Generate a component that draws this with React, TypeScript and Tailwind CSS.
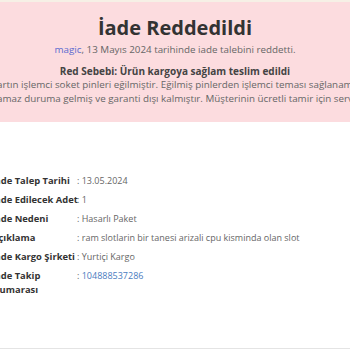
const rows: { label: string; value: string; link?: boolean }[] = [
  { label: 'İade Talep Tarihi', value: '13.05.2024' },
  { label: 'İade Edilecek Adet', value: '1' },
  { label: 'İade Nedeni', value: 'Hasarlı Paket' },
  { label: 'Açıklama', value: 'ram slotlarin bir tanesi arizali cpu kisminda olan slot' },
  { label: 'İade Kargo Şirketi', value: 'Yurtiçi Kargo' },
  { label: 'İade Takip Numarası', value: '104888537286', link: true },
]

export default function App() {
  return (
    <div className="w-[350px] h-[350px] overflow-hidden bg-white font-['Open_Sans',sans-serif] text-[#444]">
      <div className="h-[2px] bg-[#f6f0e6]" />
      <div className="bg-[#fcdcdf] h-[120px] pt-[12px] flex flex-col items-center overflow-hidden">
        <h1 className="text-[20px] font-bold text-[#333] leading-[28px]">İade Reddedildi</h1>
        <p className="mt-[1px] text-[9.8px] leading-[14px] text-[#666]">
          <span className="text-[#5b6bd0]">magic</span>, 13 Mayıs 2024 tarihinde iade talebini reddetti.
        </p>
        <p className="mt-[7px] text-[10px] leading-[14px] font-bold text-[#444]">Red Sebebi: Ürün kargoya sağlam teslim edildi</p>
        <div className="w-full flex flex-col items-center text-[9.8px] leading-[14px] text-[#666]">
          <div className="whitespace-nowrap">kartın işlemci soket pinleri eğilmiştir. Eğilmiş pinlerden işlemci teması sağlanama</div>
          <div className="whitespace-nowrap">lamaz duruma gelmiş ve garanti dışı kalmıştır. Müşterinin ücretli tamir için servi</div>
        </div>
      </div>
      <div className="h-[226px] pt-[52px] ml-[-8px]">
        <div className="grid grid-cols-[85px_1fr] gap-y-[5px] text-[9px] leading-[14px]">
          {rows.map(r => (
            <div key={r.label} className="contents">
              <div className={'font-bold text-[9.4px] text-[#333] ' + (r.link ? 'w-[60px]' : 'whitespace-nowrap')}>
                {r.label}
              </div>
              <div className="text-[#666]">
                : <span className={r.link ? 'text-[#4a7cc0]' : ''}>{r.value}</span>
              </div>
            </div>
          ))}
        </div>
      </div>
      <div className="h-[1px] bg-[#e4e4e4]" />
    </div>
  )
}
